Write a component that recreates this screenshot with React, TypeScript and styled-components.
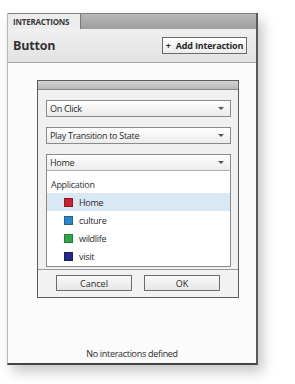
import React from "react";
import styled, { createGlobalStyle } from "styled-components";

const Global = createGlobalStyle`
  html, body { margin: 0; padding: 0; background: #ffffff; }
  body { font-family: "Open Sans", "Noto Sans", sans-serif; color: #222; }
`;

const Page = styled.div`
  width: 295px;
  height: 384px;
  padding: 13px 0 0 7px;
  box-sizing: border-box;
`;

const Panel = styled.div`
  width: 251px;
  height: 352px;
  box-sizing: border-box;
  display: flex;
  flex-direction: column;
  border-left: 1px solid #b8b8b8;
  border-right: 2px solid #5a5a5a;
  border-bottom: 2px solid #444;
  box-shadow: 5px 7px 12px rgba(0, 0, 0, 0.22);
  background: #fafafa;
`;

const TabBar = styled.div`
  height: 16px;
  display: flex;
  background: linear-gradient(#b8b8b8, #9e9e9e);
  border-top: 1px solid #808080;
  box-sizing: border-box;
`;

const Tab = styled.div`
  width: 73px;
  background: #ececec;
  border-right: 1px solid #7a7a7a;
  font-size: 8px;
  font-weight: 700;
  color: #3a3a3a;
  display: flex;
  align-items: center;
  padding-left: 5px;
  box-sizing: border-box;
  letter-spacing: -0.2px;
`;

const Header = styled.div`
  height: 34px;
  display: flex;
  align-items: center;
  justify-content: space-between;
  padding: 0 9px 0 5px;
  background: linear-gradient(#f0f0f0, #e2e2e2);
  border-bottom: 1px solid #a8a8a8;
  box-sizing: border-box;
`;

const Title = styled.div`
  font-size: 12.5px;
  font-weight: 700;
  color: #333;
  letter-spacing: -0.2px;
`;

const AddButton = styled.div`
  width: 85px;
  height: 17px;
  box-sizing: border-box;
  border: 1px solid #6a6a6a;
  background: linear-gradient(#ffffff, #ececec);
  display: flex;
  align-items: center;
  justify-content: center;
  gap: 5px;
  font-size: 9px;
  font-weight: 700;
  color: #2a2a2a;
  letter-spacing: -0.2px;
`;

const Body = styled.div`
  flex: 1;
  display: flex;
  flex-direction: column;
  align-items: center;
  padding: 17px 0 0 0;
  background: #fbfbfb;
`;

const Dialog = styled.div`
  width: 202px;
  box-sizing: border-box;
  border: 1px solid #5c5c5c;
  background: #f0f0f0;
  display: flex;
  flex-direction: column;
  margin-left: 12px;
`;

const DialogBar = styled.div`
  height: 8px;
  background: linear-gradient(#d2d2d2, #b8b8b8);
  border-bottom: 1px solid #8a8a8a;
`;

const DialogContent = styled.div`
  display: flex;
  flex-direction: column;
  gap: 10px;
  padding: 10px 7px 2px 8px;
`;

const Select = styled.div<{ $open?: boolean }>`
  height: 17px;
  box-sizing: border-box;
  border: 1px solid #8a8a8a;
  border-bottom-color: ${(p) => (p.$open ? "#b0b0b0" : "#8a8a8a")};
  background: linear-gradient(#ffffff, #ebebeb);
  display: flex;
  align-items: center;
  justify-content: space-between;
  padding: 0 6px 0 3px;
  font-size: 9px;
  color: #2a2a2a;
  letter-spacing: -0.3px;
`;

const Arrow = styled.span`
  width: 0;
  height: 0;
  border-left: 3.5px solid transparent;
  border-right: 3.5px solid transparent;
  border-top: 3.5px solid #555;
`;

const Dropdown = styled.div`
  display: flex;
  flex-direction: column;
`;

const List = styled.div`
  height: 96px;
  box-sizing: border-box;
  border: 1px solid #8a8a8a;
  border-top: none;
  background: #ffffff;
  display: flex;
  flex-direction: column;
  padding-top: 4px;
`;

const GroupLabel = styled.div`
  height: 18px;
  display: flex;
  align-items: center;
  padding-left: 4px;
  font-size: 9px;
  color: #333;
  letter-spacing: -0.3px;
`;

const Item = styled.div<{ $active?: boolean }>`
  height: 18px;
  display: flex;
  align-items: center;
  gap: 6px;
  padding-left: 17px;
  font-size: 9px;
  color: #2a2a2a;
  letter-spacing: -0.3px;
  background: ${(p) => (p.$active ? "#d8e8f5" : "transparent")};
`;

const Swatch = styled.span<{ $color: string }>`
  width: 7px;
  height: 7px;
  background: ${(p) => p.$color};
  border: 1px solid rgba(0, 0, 0, 0.25);
`;

const Footer = styled.div`
  border-top: 1px solid #9a9a9a;
  display: flex;
  justify-content: center;
  gap: 12px;
  padding: 5px 0 6px 0;
  background: #f2f2f2;
`;

const DlgButton = styled.div`
  width: 76px;
  height: 16px;
  box-sizing: border-box;
  border: 1px solid #6e6e6e;
  background: linear-gradient(#fafafa, #e6e6e6);
  display: flex;
  align-items: center;
  justify-content: center;
  font-size: 9px;
  color: #2a2a2a;
`;

const Empty = styled.div`
  margin-top: auto;
  margin-bottom: 3px;
  font-size: 9px;
  color: #2a2a2a;
  letter-spacing: -0.3px;
`;

const items = [
  { name: "Home", color: "#c8222c", active: true },
  { name: "culture", color: "#2a86c8" },
  { name: "wildlife", color: "#2aa84a" },
  { name: "visit", color: "#23288a" },
];

export default function App() {
  return (
    <>
      <Global />
      <Page>
        <Panel>
          <TabBar>
            <Tab>INTERACTIONS</Tab>
          </TabBar>
          <Header>
            <Title>Button</Title>
            <AddButton>
              <span>+</span>
              <span>Add Interaction</span>
            </AddButton>
          </Header>
          <Body>
            <Dialog>
              <DialogBar />
              <DialogContent>
                <Select>
                  <span>On Click</span>
                  <Arrow />
                </Select>
                <Select>
                  <span>Play Transition to State</span>
                  <Arrow />
                </Select>
                <Dropdown>
                  <Select $open>
                    <span>Home</span>
                    <Arrow />
                  </Select>
                  <List>
                    <GroupLabel>Application</GroupLabel>
                    {items.map((it) => (
                      <Item key={it.name} $active={it.active}>
                        <Swatch $color={it.color} />
                        <span>{it.name}</span>
                      </Item>
                    ))}
                  </List>
                </Dropdown>
              </DialogContent>
              <Footer>
                <DlgButton>Cancel</DlgButton>
                <DlgButton>OK</DlgButton>
              </Footer>
            </Dialog>
            <Empty>No interactions defined</Empty>
          </Body>
        </Panel>
      </Page>
    </>
  );
}
